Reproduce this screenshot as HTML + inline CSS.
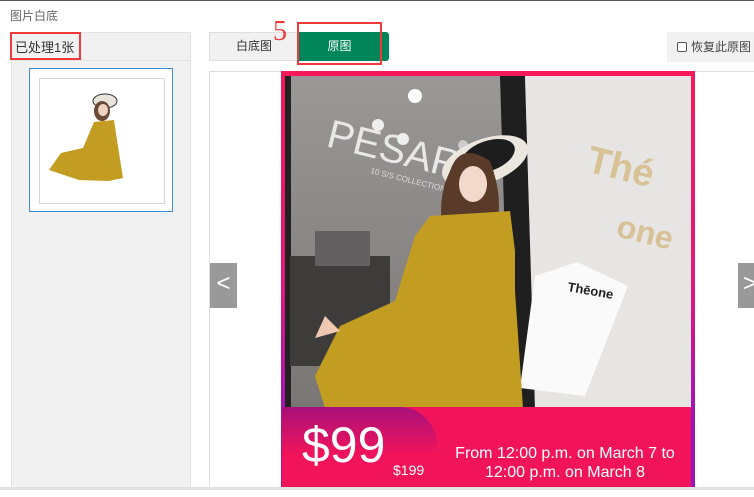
<!DOCTYPE html>
<html><head><meta charset="utf-8"><style>
*{margin:0;padding:0;box-sizing:border-box}
body{width:754px;height:497px;overflow:hidden;background:#fff;font-family:"Liberation Sans","Noto Sans CJK SC",sans-serif;position:relative}
.a{position:absolute}
</style></head><body>
<div class="a" style="left:0;top:0;width:754px;height:1px;background:#555"></div>
<div class="a" style="left:10px;top:7px;font-size:12px;color:#666">图片白底</div>
<div class="a" style="left:11px;top:32px;width:180px;height:456px;background:#f1f1f1;border:1px solid #e2e2e2"></div>
<div class="a" style="left:11px;top:60px;width:180px;height:1px;background:#e2e2e2"></div>
<div class="a" style="left:15px;top:37px;font-size:13px;color:#333">已处理1张</div>
<div class="a" style="left:10px;top:32px;width:71px;height:28px;border:2px solid #f03a3a"></div>
<div class="a" style="left:29px;top:68px;width:144px;height:144px;border:1px solid #3f8ad6;background:#fff"></div>
<div class="a" style="left:39px;top:78px;width:126px;height:126px;border:1px solid #d6d6d6;background:#fff"></div>
<svg class="a" style="left:39px;top:78px" width="126" height="126">
<ellipse cx="66" cy="23" rx="12" ry="7" fill="#e8e4da" stroke="#333" stroke-width="1"/>
<ellipse cx="63" cy="33" rx="8" ry="10" fill="#6b4a35"/>
<ellipse cx="64" cy="32" rx="5" ry="6" fill="#f0d2c2"/>
<path d="M55 44 L75 42 L78 62 L84 100 L70 103 L40 102 L10 92 L22 75 L44 70 Z" fill="#c39d22"/>
</svg>
<div class="a" style="left:209px;top:32px;width:90px;height:29px;background:#f1f1f1;border:1px solid #dedede;font-size:12px;color:#333;text-align:center;line-height:27px">白底图</div>
<div class="a" style="left:298px;top:32px;width:91px;height:29px;background:#008658;border-radius:0 3px 3px 0;font-size:12px;color:#fff;text-align:center;line-height:29px;padding-right:8px">原图</div>
<div class="a" style="left:297px;top:22px;width:85px;height:43px;border:2px solid #f03a3a"></div>
<div class="a" style="left:273px;top:16px;font-family:'Liberation Serif',serif;font-size:28px;color:#f03a3a">5</div>
<div class="a" style="left:667px;top:32px;width:87px;height:30px;background:#f1f1f1;font-size:12px;color:#444;line-height:30px;padding-left:10px"><span style="display:inline-block;width:10px;height:10px;border:1px solid #555;border-radius:2px;vertical-align:-1px;margin-right:4px;background:#fff"></span>恢复此原图</div>
<div class="a" style="left:209px;top:71px;width:560px;height:418px;border:1px solid #dedede;background:#fff"></div>
<div class="a" style="left:0;top:487px;width:754px;height:3px;background:#e0e0e0"></div>
<div class="a" style="left:281px;top:71px;width:414px;height:416px;background:linear-gradient(180deg,#f5195a 0%,#e3187a 50%,#9a15b8 85%)"></div>
<svg class="a" style="left:285px;top:76px" width="406" height="332">
<defs><linearGradient id="g" x1="0" y1="0" x2="0" y2="1"><stop offset="0" stop-color="#9a9897"/><stop offset="1" stop-color="#7a7674"/></linearGradient></defs>
<rect width="406" height="332" fill="url(#g)"/>
<rect x="0" y="0" width="6" height="332" fill="#222"/>
<rect x="5" y="180" width="100" height="110" fill="#3e3b3b"/>
<rect x="30" y="155" width="55" height="35" fill="#626060"/>
<polygon points="215,0 240,0 250,332 225,332" fill="#1f1f1f"/>
<polygon points="240,0 406,0 406,332 250,332" fill="#e6e5e3"/>
<text x="40" y="70" font-family="Liberation Sans" font-size="40" fill="#e8e8e8" transform="rotate(14 40 70)">PESARO</text>
<text x="85" y="97" font-family="Liberation Sans" font-size="8" fill="#ddd" transform="rotate(14 85 97)">10 S/S COLLECTION</text>
<circle cx="130" cy="20" r="7" fill="#fff"/><circle cx="93" cy="49" r="6" fill="#eee"/><circle cx="118" cy="63" r="6" fill="#eee"/><circle cx="178" cy="69" r="5" fill="#ccc"/>
<text x="300" y="95" font-family="Liberation Sans" font-weight="bold" font-size="38" fill="#d8c295" transform="rotate(14 300 95)">Thé</text>
<text x="330" y="160" font-family="Liberation Sans" font-weight="bold" font-size="32" fill="#d8c295" transform="rotate(14 330 160)">one</text>
<polygon points="250,200 292,186 343,210 300,320 235,312" fill="#fafafa"/>
<text x="282" y="215" font-family="Liberation Sans" font-size="13" font-weight="bold" fill="#222" transform="rotate(10 282 215)">Thēone</text>
<ellipse cx="200" cy="85" rx="45" ry="22" fill="#ebe7de" transform="rotate(-20 200 85)"/>
<ellipse cx="203" cy="80" rx="28" ry="15" fill="#1d1d1d" transform="rotate(-20 203 80)"/>
<path d="M165 95 Q175 65 205 85 Q220 125 210 155 L160 165 Q150 125 165 95Z" fill="#5a3a28"/>
<ellipse cx="188" cy="108" rx="14" ry="18" fill="#f3d8cc"/>
<path d="M145 140 L225 135 L230 175 L230 215 L238 332 L40 332 L30 300 L55 250 L110 225 L130 160 Z" fill="#c39d22"/>
<path d="M40 240 L30 262 L55 255 Z" fill="#f0c8b0"/>
</svg>
<div class="a" style="left:285px;top:407px;width:406px;height:80px;background:#f2145a"></div>
<div class="a" style="left:282px;top:407px;width:155px;height:80px;background:linear-gradient(180deg,#a8107a,#f2145a 60%);border-radius:0 38px 0 0"></div>
<div class="a" style="left:302px;top:420px;font-family:'Liberation Sans',sans-serif;font-size:50px;color:#fff;line-height:1">$99</div>
<div class="a" style="left:393px;top:462px;font-size:14px;color:#fff">$199</div>
<div class="a" style="left:445px;top:444px;width:240px;text-align:center;font-size:16px;color:#fff;line-height:19px">From 12:00 p.m. on March 7 to<br>12:00 p.m. on March 8</div>
<div class="a" style="left:210px;top:263px;width:27px;height:45px;background:#999;color:#fff;font-size:24px;text-align:center;line-height:42px">&lt;</div>
<div class="a" style="left:738px;top:263px;width:27px;height:45px;background:#999;color:#fff;font-size:24px;line-height:42px;padding-left:5px">&gt;</div>
</body></html>
